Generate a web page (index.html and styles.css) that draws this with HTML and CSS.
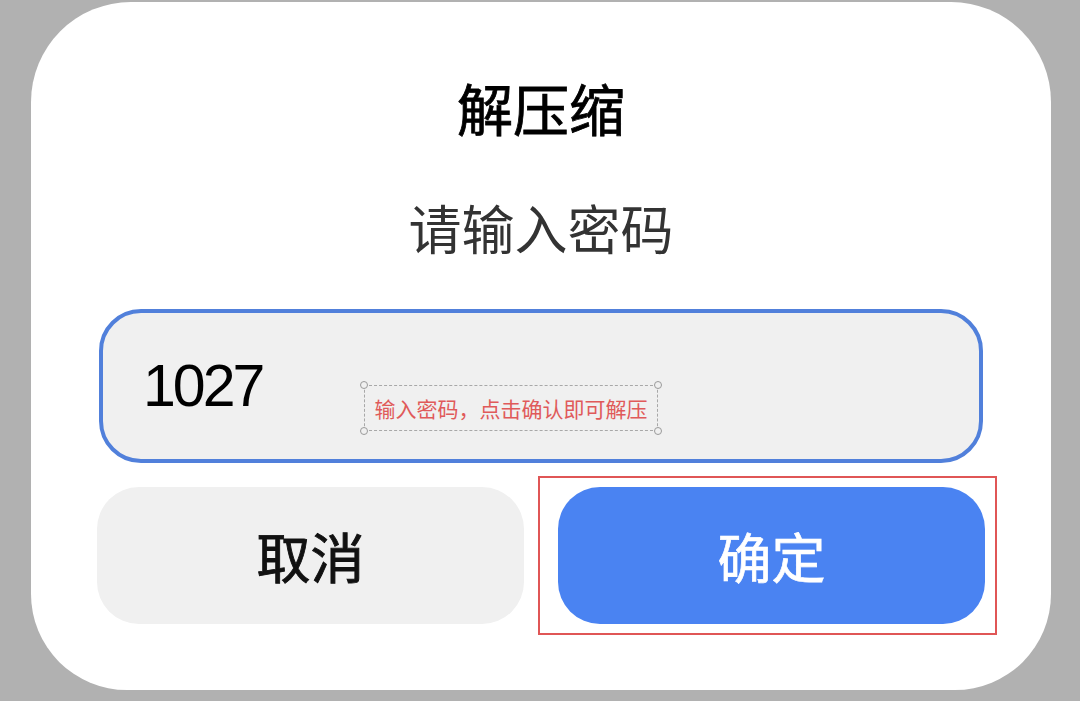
FILE: index.html
```html
<!DOCTYPE html>
<html lang="zh-CN">
<head>
<meta charset="utf-8">
<title>解压缩</title>
<link rel="stylesheet" href="styles.css">
</head>
<body>
<div class="dialog">
  <h1 class="title">解压缩</h1>
  <p class="subtitle">请输入密码</p>
  <div class="field">
    <span class="value">1027</span>
    <div class="note">
      <span class="dot tl"></span><span class="dot tr"></span><span class="dot bl"></span><span class="dot br"></span>
      输入密码，点击确认即可解压
    </div>
  </div>
  <div class="actions">
    <button class="btn cancel">取消</button>
    <button class="btn ok">确定<span class="highlight"></span></button>
  </div>
</div>
</body>
</html>
```
FILE: styles.css
```css
html, body {
  margin: 0;
  padding: 0;
  background: #b1b1b1;
  width: 1080px;
  height: 701px;
  overflow: hidden;
  font-family: "Noto Sans CJK SC", "Noto Sans", sans-serif;
}

.dialog {
  box-sizing: border-box;
  margin: 2px 0 0 31px;
  width: 1020px;
  height: 688px;
  background: #ffffff;
  border-radius: 100px 100px 96px 96px;
  padding-top: 77px;
  display: flex;
  flex-direction: column;
  align-items: center;
}

.title {
  margin: 0;
  font-size: 56px;
  line-height: 56px;
  font-weight: 400;
  -webkit-text-stroke: 0.8px #000;
  color: #000;
}

.subtitle {
  margin: 66px 0 0;
  font-size: 53px;
  line-height: 53px;
  font-weight: 400;
  color: #333;
}

.field {
  position: relative;
  box-sizing: border-box;
  margin-top: 55px;
  width: 884px;
  height: 154px;
  border: 4px solid #5180db;
  border-radius: 42px;
  background: #f0f0f0;
  display: flex;
  align-items: center;
  padding-left: 40px;
}

.value {
  font-family: "Liberation Sans", Arial, sans-serif;
  font-size: 59px;
  letter-spacing: -3px;
  color: #000;
  line-height: 1;
}

.note {
  position: absolute;
  left: 261px;
  top: 72px;
  box-sizing: border-box;
  width: 294px;
  height: 46px;
  border: 1px dashed #a8a8a8;
  display: flex;
  align-items: center;
  justify-content: center;
  font-size: 21px;
  color: #e05a5a;
  white-space: nowrap;
}

.dot {
  position: absolute;
  width: 6px;
  height: 6px;
  border: 1px solid #9a9a9a;
  border-radius: 50%;
  background: #f0f0f0;
}
.dot.tl { left: -5px; top: -5px; }
.dot.tr { right: -5px; top: -5px; }
.dot.bl { left: -5px; bottom: -5px; }
.dot.br { right: -5px; bottom: -5px; }

.actions {
  margin-top: 24px;
  width: 888px;
  display: flex;
  gap: 34px;
}

.btn {
  position: relative;
  flex: 1;
  height: 137px;
  border: none;
  border-radius: 42px;
  font-family: "Noto Sans CJK SC", "Noto Sans", sans-serif;
  font-size: 54px;
  font-weight: 400;
  padding: 0;
}

.cancel {
  background: #f0f0f0;
  color: #111;
  -webkit-text-stroke: 0.9px #111;
}

.ok {
  background: #4a83f2;
  color: #fff;
  -webkit-text-stroke: 0.7px #fff;
}

.highlight {
  position: absolute;
  left: -20px;
  top: -11px;
  right: -12px;
  bottom: -11px;
  border: 2.5px solid #e05656;
}
```
